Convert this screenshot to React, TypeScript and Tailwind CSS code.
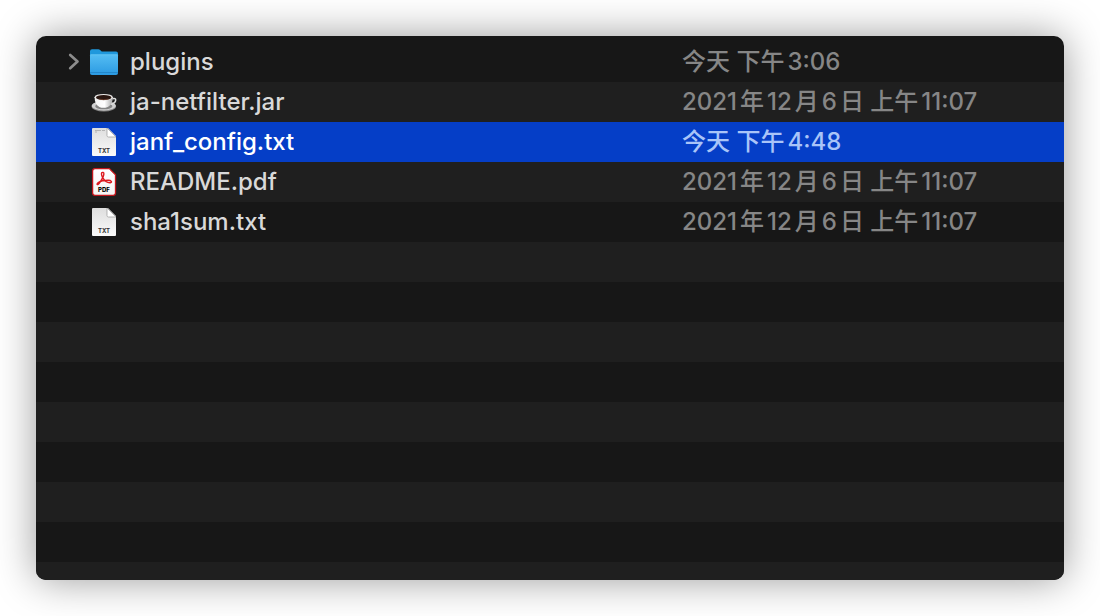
type Kind = "folder" | "jar" | "txt" | "config" | "pdf";

type Entry = { name: string; date: string; kind: Kind; selected?: boolean };

const entries: Entry[] = [
  { name: "plugins", date: "今天 下午3:06", kind: "folder" },
  { name: "ja-netfilter.jar", date: "2021年12月6日 上午11:07", kind: "jar" },
  { name: "janf_config.txt", date: "今天 下午4:48", kind: "config", selected: true },
  { name: "README.pdf", date: "2021年12月6日 上午11:07", kind: "pdf" },
  { name: "sha1sum.txt", date: "2021年12月6日 上午11:07", kind: "txt" },
];

function FolderIcon() {
  return (
    <svg viewBox="0 0 32 32" className="size-8" aria-hidden="true">
      <defs>
        <linearGradient id="folder-front" x1="0" y1="0" x2="0" y2="1">
          <stop offset="0" stopColor="#55bdf3" />
          <stop offset="1" stopColor="#2b9ae2" />
        </linearGradient>
      </defs>
      <path d="M2 5.2Q2 3.2 4 3.2h6.3q1 0 1.8.8l1 .9q.6.5 1.5.5H28q2 0 2 2V12H2Z" fill="#2098dc" />
      <path d="M2 9.5q0-1 1-1h26q1 0 1 1V27q0 2-2 2H4q-2 0-2-2Z" fill="url(#folder-front)" />
      <path d="M2.5 8.8h27" stroke="#6cc8f7" strokeWidth=".7" />
      <path d="M2 26.5h28" stroke="#2387cb" strokeWidth="1" />
    </svg>
  );
}

function CupIcon() {
  return (
    <svg viewBox="0 0 32 32" className="size-8" aria-hidden="true">
      <defs>
        <linearGradient id="cup-body" x1="0" y1="0" x2="1" y2="0">
          <stop offset="0" stopColor="#f4f4f4" />
          <stop offset=".55" stopColor="#ffffff" />
          <stop offset="1" stopColor="#a9a9a9" />
        </linearGradient>
      </defs>
      <ellipse cx="15.8" cy="20.4" rx="12.2" ry="5.2" fill="#8b8b8b" />
      <ellipse cx="15.8" cy="19.7" rx="12" ry="4.7" fill="#d0d0d0" />
      <ellipse cx="15.8" cy="20.2" rx="8.6" ry="3.1" fill="#858585" />
      <path d="M24 12.8q4.2-1.2 3.6 1.8-.5 2.8-5 3.5" fill="none" stroke="#dedede" strokeWidth="1.6" />
      <path d="M6.6 11c0 5 1.7 8 4.7 10q4.2 1.7 8.4 0c3.5-2 5-5 5-10Z" fill="url(#cup-body)" />
      <ellipse cx="15.7" cy="11.2" rx="9.1" ry="3.3" fill="#e9e7e5" />
      <ellipse cx="15.7" cy="11.6" rx="7.7" ry="2.5" fill="#291610" />
      <path d="M11 13.1q4.5 1.2 9.5 0" fill="none" stroke="#70402d" strokeWidth=".7" />
    </svg>
  );
}

function PageIcon({ kind }: { kind: "txt" | "config" | "pdf" }) {
  const pdf = kind === "pdf";
  const id = "page-" + kind;
  return (
    <svg viewBox="0 0 32 32" className="size-8" aria-hidden="true">
      <defs>
        <linearGradient id={id} x1="0" y1="0" x2="0" y2="1">
          <stop offset="0" stopColor={pdf ? "#ffffff" : "#dedede"} />
          <stop offset="1" stopColor={pdf ? "#f4f4f4" : "#fafafa"} />
        </linearGradient>
      </defs>
      {pdf ? (
        <path
          d="M7 2.6h14.3l6.200 6.200V27q0 2.400-2.400 2.400H7Q4.600 29.400 4.600 27V5Q4.600 2.600 7 2.600Z"
          fill={`url(#${id})`}
          stroke="#c4161c"
          strokeWidth="1.300"
        />
      ) : (
        <>
          <path d="M5 2h15l8 8v19q0 1-1 1H5q-1 0-1-1V3q0-1 1-1Z" fill={`url(#${id})`} />
          <path d="M19 2v7.5q0 1.5 1.5 1.5H28Z" fill="#ffffff" stroke="#999999" strokeWidth=".7" />
        </>
      )}
      {kind === "config" && (
        <path d="M7 4.5h6M7 6h2M14 4.5h3" stroke="#a8a8a8" strokeWidth=".8" />
      )}
      {pdf && (
        <path
          d="M15.2 6.500c-2.100-.6-2.200 2-.8 4.600 1.900 3.500 5 5.800 8 5.600 2.200-.3.900-2.500-2.200-2.500-4.200 0-7.800.9-9.900 2.300-2.500 1.800-.6 3.200.9.900 2-2.800 4-6 4.600-8.900.3-1.200.1-1.800-.6-2Z"
          fill="none"
          stroke="#dd1a20"
          strokeWidth="1.400"
        />
      )}
      <text
        x="16"
        y={pdf ? 26 : 27}
        textAnchor="middle"
        className={
          pdf
            ? "font-['Inter',sans-serif] text-[6px] font-extrabold"
            : "font-['Inter',sans-serif] text-[6px] font-bold"
        }
        fill={pdf ? "#000000" : "#333333"}
      >
        {pdf ? "PDF" : "TXT"}
      </text>
    </svg>
  );
}

function FileIcon({ kind }: { kind: Kind }) {
  if (kind === "folder") return <FolderIcon />;
  if (kind === "jar") return <CupIcon />;
  return <PageIcon kind={kind} />;
}

export default function App() {
  return (
    <main className="flex min-h-screen bg-white p-9 font-['Inter','Noto_Sans_CJK_SC',sans-serif]">
      <section className="flex flex-1 flex-col overflow-hidden rounded-[10px] bg-[#171717] pt-1.5 shadow-[0_0_40px_rgba(0,0,0,0.4)]">
        <table className="w-full table-fixed border-collapse text-left text-2xl leading-10 [text-autospace:normal]">
          <colgroup>
            <col />
            <col className="w-[382px]" />
          </colgroup>
          <tbody>
            {entries.map((entry) => (
              <tr
                key={entry.name}
                className={
                  entry.selected
                    ? "h-10 bg-[#053ec7] text-white"
                    : "h-10 text-[#d9d9d9] even:bg-[#1f1f1f]"
                }
              >
                <td className="p-0">
                  <div className="flex h-10 items-center pl-8">
                    <div className="flex w-5 shrink-0">
                      {entry.kind === "folder" && (
                        <button type="button" aria-label="plugins" className="flex">
                          <svg viewBox="0 0 12 20" className="h-5 w-3" fill="none" stroke="#8c8c8c" strokeWidth="2.7" strokeLinecap="round" strokeLinejoin="round" aria-hidden="true">
                            <path d="M2.2 3 9.5 9.6 2.2 16.2" />
                          </svg>
                        </button>
                      )}
                    </div>
                    <FileIcon kind={entry.kind} />
                    <span className="truncate pl-2.5 font-[450]">{entry.name}</span>
                  </div>
                </td>
                <td
                  className={
                    entry.selected
                      ? "truncate p-0 font-medium text-[#a9c4f8]"
                      : "truncate p-0 font-medium text-[#868686]"
                  }
                >
                  <div className="h-10">{entry.date}</div>
                </td>
              </tr>
            ))}
          </tbody>
        </table>
        <div className="flex-1 bg-[repeating-linear-gradient(to_bottom,#1f1f1f_0px,#1f1f1f_40px,#171717_40px,#171717_80px)]" />
      </section>
    </main>
  );
}
